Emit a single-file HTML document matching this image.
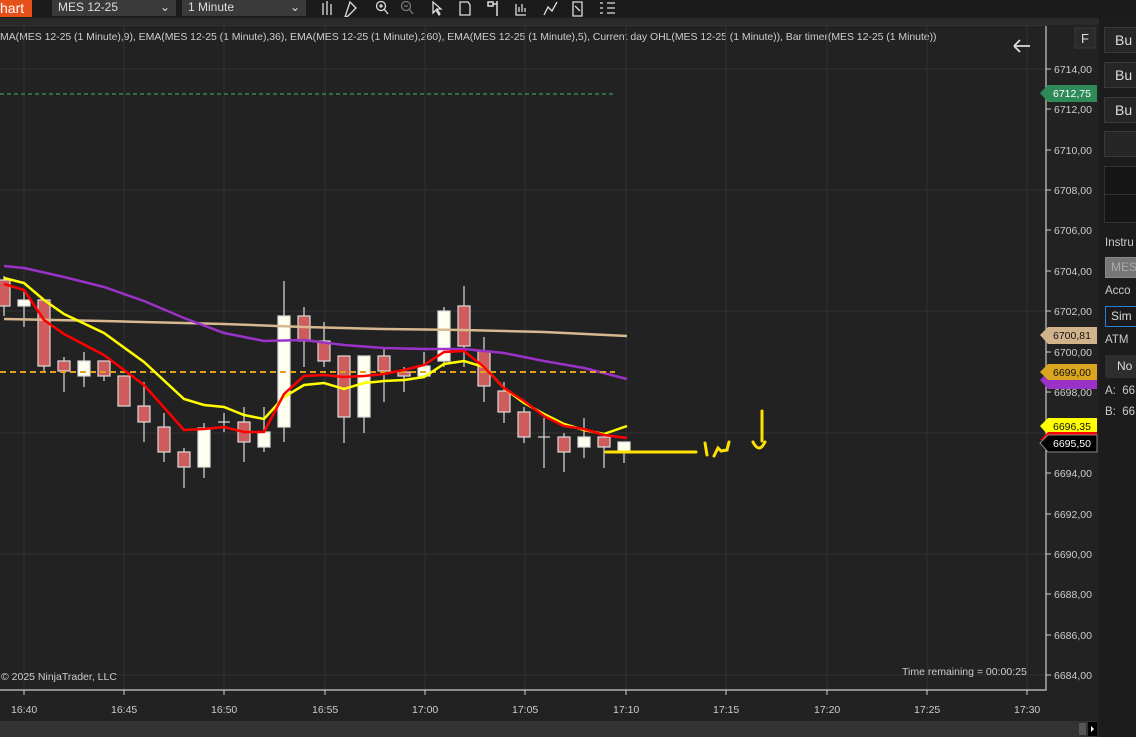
<!DOCTYPE html>
<html><head><meta charset="utf-8"><style>
*{margin:0;padding:0;box-sizing:border-box}
body{width:1136px;height:737px;background:#222;font-family:"Liberation Sans",sans-serif;overflow:hidden;position:relative;color:#ccc}
.a{position:absolute}
.top{left:0;top:0;width:1136px;height:18px;background:#1b1b1b}
.dd{top:0;height:16px;background:#3a3a3a;color:#ddd;font-size:12px;line-height:15px;padding-left:6px}
.lbl{font-size:11px;color:#ccc}
.rp{left:1099px;top:18px;width:37px;height:719px;background:#1c1c1c}
.btn{left:1104px;width:40px;height:26px;background:#262626;border:1px solid #3a3a3a;color:#ddd;font-size:14px;line-height:24px;padding-left:10px}
.rt{left:1105px;font-size:12px;color:#ccc}
</style></head><body>
<div class="a top"></div>
<div class="a" style="left:0;top:0;width:32px;height:17px;background:#e8501a;color:#fff;font-size:14px;line-height:17px">hart</div>
<div class="a dd" style="left:52px;width:124px">MES 12-25<span style="position:absolute;right:6px">⌄</span></div>
<div class="a dd" style="left:182px;width:124px">1 Minute<span style="position:absolute;right:6px">⌄</span></div>
<svg class="a" style="left:318px;top:0" width="300" height="17" stroke="#ddd" fill="none" stroke-width="1.3">
<path d="M5 3v12M9 1v14M13 4v11"/><path d="M32 2l6 6-8 8-3 1 1-3z"/>
<circle cx="63" cy="6" r="4.5"/><path d="M66 9l4 5M61 6h4M63 4v4"/>
<circle cx="88" cy="6" r="4.5" stroke="#777"/><path d="M91 9l4 5M86 6h4" stroke="#777"/>
<path d="M115 2v11l3-3 3 5 1-1-3-5h4z"/><path d="M142 2h8l2 3v10h-10z"/><path d="M170 2h5v4h-5zM175 4h4M179 1v15" stroke-width="1.5"/>
<path d="M198 4v11h10M201 12v-5M204 12v-8M207 12v-4"/><path d="M226 15l4-8 4 4 5-9"/><path d="M255 2h9v14h-9zM257 6l5 5"/><path d="M282 3h3M289 3h8M282 8h3M289 8h8M282 13h3M289 13h8"/>
</svg>
<div class="a" style="left:0;top:18px;width:1099px;height:7px;background:#2a2a2a"></div>
<div class="a" style="left:0;top:25px;width:1046px;height:1px;background:#333"></div>
<div class="a lbl" style="left:0;top:31px;white-space:nowrap;font-size:10.5px;letter-spacing:-0.05px">MA(MES 12-25 (1 Minute),9), EMA(MES 12-25 (1 Minute),36), EMA(MES 12-25 (1 Minute),260), EMA(MES 12-25 (1 Minute),5), Current day OHL(MES 12-25 (1 Minute)), Bar timer(MES 12-25 (1 Minute))</div>
<svg class="a" style="left:0;top:0" width="1099" height="737">
<g stroke="#333" stroke-width="1">
<path d="M0 69H1046M0 190H1046M0 311H1046M0 433H1046M0 554H1046M0 675H1046"/>
<path d="M24 26V690M124 26V690M224 26V690M325 26V690M425 26V690M525 26V690M626 26V690M726 26V690M827 26V690M927 26V690M1027 26V690"/>
</g>
<path d="M1046 26V690H0" stroke="#ccc" stroke-width="1.2" fill="none"/>
<g stroke="#ccc"><path d="M1046 69h5M1046 109h5M1046 150h5M1046 190h5M1046 230h5M1046 271h5M1046 311h5M1046 352h5M1046 392h5M1046 433h5M1046 473h5M1046 514h5M1046 554h5M1046 594h5M1046 635h5M1046 675h5"/>
<path d="M24 690v5M124 690v5M224 690v5M325 690v5M425 690v5M525 690v5M626 690v5M726 690v5M827 690v5M927 690v5M1027 690v5"/></g>
<path d="M0 94H615" stroke="#3a9a5a" stroke-dasharray="4 3" stroke-width="1.3"/>
<g id="c" stroke="#ddd" stroke-width="1.2"></g>
<polyline fill="none" stroke="#d8b890" stroke-width="2.5" points="4,319 104,321 224,324 304,327 384,329 464,330 544,332 627,336"/>
<polyline fill="none" stroke="#9b32c8" stroke-width="2.5" points="4,266 24,268 64,277 104,287 144,301 184,318 224,333 264,341 304,340 344,345 384,348 424,349 464,349 504,353 544,361 584,368 627,379"/>
<path d="M0 372H615" stroke="#e0a020" stroke-dasharray="6 4" stroke-width="2"/>
<polyline fill="none" stroke="#ffff00" stroke-width="2.5" points="4,278 24,283 44,300 64,314 104,333 144,362 184,399 204,405 224,407 244,415 264,419 284,397 304,385 324,383 344,389 364,383 384,381 404,380 424,377 444,364 464,361 484,367 504,388 524,403 544,414 564,424 584,430 604,434 627,426"/>
<polyline fill="none" stroke="#ff0000" stroke-width="2.5" points="4,284 24,290 44,320 64,334 104,355 144,385 184,430 204,429 224,427 244,432 264,432 284,394 304,376 324,375 344,377 364,376 384,374 404,370 424,365 444,352 464,351 484,367 504,388 524,401 544,416 564,426 584,429 604,435 627,438"/>
<g stroke="#ffe000" stroke-width="3" fill="none" stroke-linecap="round">
<path d="M606 452H696"/><path d="M705 443l2 12"/><path d="M714 456l4-8 3 3 6-1 2-8"/><path d="M762 411v30M753 442q6 12 12 0"/>
</g>
<text x="1" y="680" font-size="10.5" fill="#ccc" font-family="Liberation Sans">© 2025 NinjaTrader, LLC</text>
<text x="902" y="675" font-size="10.5" fill="#ccc" font-family="Liberation Sans">Time remaining = 00:00:25</text>
<path d="M1014 46h16M1014 46l6-6M1014 46l6 6" stroke="#ddd" stroke-width="1.8" fill="none"/>
<rect x="1075" y="28" width="20" height="20" fill="#2a2a2a" stroke="#3a3a3a"/>
<text x="1081" y="43" font-size="13" fill="#ddd" font-family="Liberation Sans">F</text>
<g font-size="10.5" fill="#ccc" font-family="Liberation Sans">
<text x="1054" y="73">6714,00</text><text x="1054" y="113">6712,00</text><text x="1054" y="154">6710,00</text><text x="1054" y="194">6708,00</text><text x="1054" y="234">6706,00</text><text x="1054" y="275">6704,00</text><text x="1054" y="315">6702,00</text><text x="1054" y="356">6700,00</text><text x="1054" y="396">6698,00</text><text x="1054" y="477">6694,00</text><text x="1054" y="518">6692,00</text><text x="1054" y="558">6690,00</text><text x="1054" y="598">6688,00</text><text x="1054" y="639">6686,00</text><text x="1054" y="679">6684,00</text>
<text x="11" y="713">16:40</text><text x="111" y="713">16:45</text><text x="211" y="713">16:50</text><text x="312" y="713">16:55</text><text x="412" y="713">17:00</text><text x="512" y="713">17:05</text><text x="613" y="713">17:10</text><text x="713" y="713">17:15</text><text x="814" y="713">17:20</text><text x="914" y="713">17:25</text><text x="1014" y="713">17:30</text>
</g>
<rect x="0" y="721" width="1097" height="16" fill="#333"/>
<rect x="1079" y="723" width="7" height="12" fill="#555"/><rect x="1088" y="722" width="9" height="14" fill="#000"/>
<path d="M1091 726l3 3-3 3z" fill="#fff"/>
<g font-size="10.5" font-family="Liberation Sans">
<path d="M1040 93l8-8h49v17h-49z" fill="#2e8b57"/><text x="1053" y="97" fill="#fff">6712,75</text>
<path d="M1040 335l8-8h49v17h-49z" fill="#d2b48c"/><text x="1053" y="339" fill="#111">6700,81</text>
<path d="M1040 380l8-8h49v17h-49z" fill="#9b32c8"/>
<path d="M1040 372l8-8h49v16h-49z" fill="#daa520"/><text x="1053" y="376" fill="#111">6699,00</text>
<path d="M1040 426l8-8h49v17h-49z" fill="#ffff00"/><text x="1053" y="430" fill="#111">6696,35</text>
<path d="M1040 440l8-8h49v7h-49z" fill="#ff0000"/>
<path d="M1040 443l8-8h49v17h-49z" fill="#000" stroke="#888"/><text x="1053" y="447" fill="#fff">6695,50</text>
</g>
</svg>
<div class="a rp"></div>
<div class="a btn" style="top:27px">Bu</div>
<div class="a btn" style="top:62px">Bu</div>
<div class="a btn" style="top:97px">Bu</div>
<div class="a btn" style="top:131px"></div>
<div class="a" style="left:1104px;top:166px;width:40px;height:57px;background:#161616;border:1px solid #333"><div style="margin-top:27px;border-top:1px solid #333"></div></div>
<div class="a rt" style="top:237px;font-size:11.5px">Instru</div>
<div class="a" style="left:1105px;top:257px;width:40px;height:21px;background:#777;border:1px solid #888;color:#aaa;font-size:12px;line-height:19px;padding-left:5px">MES</div>
<div class="a rt" style="top:285px;font-size:11.5px">Acco</div>
<div class="a" style="left:1105px;top:306px;width:40px;height:21px;background:#1a1a1a;border:1px solid #2a7fd0;color:#ddd;font-size:12px;line-height:19px;padding-left:5px">Sim</div>
<div class="a rt" style="top:334px;font-size:11.5px">ATM</div>
<div class="a" style="left:1105px;top:355px;width:40px;height:23px;background:#2e2e2e;color:#ddd;font-size:12px;line-height:23px;padding-left:12px">No</div>
<div class="a rt" style="top:385px;font-size:11.5px">A:&nbsp; 66</div>
<div class="a rt" style="top:406px;font-size:11.5px">B:&nbsp; 66</div>
<script>
var d=[[4,'r',280,306,276,316],[24,'w',300,306,291,327],[44,'r',300,366,300,371],[64,'r',361,371,357,392],[84,'w',361,376,352,387],[104,'r',361,376,361,381],[124,'r',376,406,376,406],[144,'r',406,422,382,442],[164,'r',427,452,413,462],[184,'r',452,467,448,488],[204,'w',428,467,423,478],[224,'x',422,422,413,432],[244,'r',422,442,407,462],[264,'w',432,447,407,452],[284,'w',316,427,281,442],[304,'r',316,341,307,367],[324,'r',341,361,322,367],[344,'r',356,417,356,443],[364,'w',356,417,356,433],[384,'r',356,371,348,402],[404,'r',372,376,367,392],[424,'w',366,376,352,378],[444,'w',311,361,307,367],[464,'r',306,346,286,367],[484,'r',351,386,337,402],[504,'r',391,412,382,423],[524,'r',412,437,407,443],[544,'x',437,437,418,468],[564,'r',437,452,433,472],[584,'w',437,447,418,458],[604,'r',437,447,433,468],[624,'w',442,452,442,463]];
var g=document.getElementById('c'),s='';
d.forEach(function(c){var x=c[0];s+='<line x1="'+x+'" x2="'+x+'" y1="'+c[4]+'" y2="'+c[5]+'"/>';
if(c[1]=='x')s+='<line x1="'+(x-6)+'" x2="'+(x+6)+'" y1="'+c[2]+'" y2="'+c[2]+'"/>';
else s+='<rect x="'+(x-6)+'" y="'+c[2]+'" width="12" height="'+Math.max(2,c[3]-c[2])+'" fill="'+(c[1]=='r'?'#cd5c5c':'#fffff0')+'"/>';});
g.innerHTML=s;
</script>
</body></html>
